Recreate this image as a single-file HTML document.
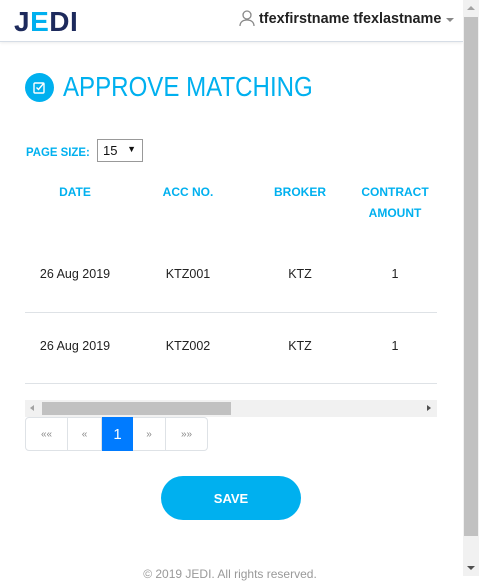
<!DOCTYPE html>
<html><head><style>
*{margin:0;padding:0;box-sizing:border-box}
body{width:479px;height:576px;overflow:hidden;position:relative;font-family:"Liberation Sans",sans-serif;background:#fff}
.a{position:absolute}
.hdr{left:0;top:0;width:463px;height:42px;border-bottom:1px solid #d6dde6;box-shadow:0 1px 3px rgba(0,0,0,.08);background:#fff}
.blue{color:#00b0ef}
.th{font-size:12px;font-weight:bold;color:#00b0ef;text-align:center;line-height:21px}
.td{font-size:12.5px;color:#222;text-align:center}
.pg{top:417px;height:34px;border:1px solid #dee2e6;border-left:none;font-size:10px;color:#888;display:flex;align-items:center;justify-content:center}
</style></head><body>
<div class="a hdr"></div>
<div class="a" style="left:14px;top:7px;font-size:28px;font-weight:bold;color:#1d2a5c;letter-spacing:0.5px;line-height:30px">J<span style="color:#00b0ef">E</span>DI</div>
<svg class="a" style="left:239px;top:10px" width="16" height="17" viewBox="0 0 16 17"><circle cx="8" cy="5" r="4" fill="none" stroke="#888" stroke-width="1.3"/><path d="M1 16c0-4 3-6 7-6s7 2 7 6" fill="none" stroke="#888" stroke-width="1.3"/></svg>
<div class="a" style="left:259px;top:11px;font-size:14.4px;font-weight:bold;color:#222">tfexfirstname tfexlastname</div>
<div class="a" style="left:446px;top:18px;width:0;height:0;border-left:4px solid transparent;border-right:4px solid transparent;border-top:4px solid #888"></div>
<div class="a" style="left:463px;top:0;width:16px;height:576px;background:#f1f1f1"></div>
<div class="a" style="left:464px;top:17px;width:14px;height:519px;background:#c1c1c1"></div>
<div class="a" style="left:467px;top:6px;border-left:4px solid transparent;border-right:4px solid transparent;border-bottom:4px solid #a3a3a3"></div>
<div class="a" style="left:467px;top:566px;border-left:4px solid transparent;border-right:4px solid transparent;border-top:4px solid #505050"></div>
<div class="a" style="left:25px;top:73px;width:29px;height:29px;border-radius:50%;background:#00b0ef"></div>
<svg class="a" style="left:33px;top:81px" width="13" height="13" viewBox="0 0 13 13"><rect x="1" y="2" width="10" height="10" rx="1" fill="none" stroke="#fff" stroke-width="1.4"/><path d="M3.5 6.5l2 2 5-6" fill="none" stroke="#fff" stroke-width="1.4"/></svg>
<div class="a blue" style="left:63px;top:70px;font-size:28px;line-height:34px;transform:scaleX(0.86);transform-origin:left top;white-space:nowrap">APPROVE MATCHING</div>
<div class="a blue" style="left:26px;top:145px;font-size:12px;font-weight:bold;transform:scaleX(0.95);transform-origin:left">PAGE SIZE:</div>
<div class="a" style="left:97px;top:139px;width:46px;height:23px;border:1px solid #999;font-size:13px;padding:3px 5px;color:#111">15<span style="position:absolute;right:6px;top:4px;font-size:9px">▼</span></div>
<div class="a th" style="left:35px;top:182px;width:80px">DATE</div>
<div class="a th" style="left:143px;top:182px;width:90px">ACC NO.</div>
<div class="a th" style="left:260px;top:182px;width:80px">BROKER</div>
<div class="a th" style="left:355px;top:182px;width:80px">CONTRACT<br>AMOUNT</div>
<div class="a td" style="left:25px;top:267px;width:100px">26 Aug 2019</div>
<div class="a td" style="left:138px;top:267px;width:100px">KTZ001</div>
<div class="a td" style="left:260px;top:267px;width:80px">KTZ</div>
<div class="a td" style="left:375px;top:267px;width:40px">1</div>
<div class="a" style="left:25px;top:312px;width:412px;height:1px;background:#dee2e6"></div>
<div class="a td" style="left:25px;top:339px;width:100px">26 Aug 2019</div>
<div class="a td" style="left:138px;top:339px;width:100px">KTZ002</div>
<div class="a td" style="left:260px;top:339px;width:80px">KTZ</div>
<div class="a td" style="left:375px;top:339px;width:40px">1</div>
<div class="a" style="left:25px;top:383px;width:412px;height:1px;background:#dee2e6"></div>
<div class="a" style="left:25px;top:400px;width:412px;height:17px;background:#f1f1f1"></div>
<div class="a" style="left:42px;top:402px;width:189px;height:13px;background:#c1c1c1"></div>
<div class="a" style="left:30px;top:405px;border-top:3px solid transparent;border-bottom:3px solid transparent;border-right:4px solid #a3a3a3"></div>
<div class="a" style="left:427px;top:405px;border-top:3px solid transparent;border-bottom:3px solid transparent;border-left:4px solid #505050"></div>
<div class="a pg" style="left:25px;width:43px;border-left:1px solid #dee2e6;border-radius:4px 0 0 4px">««</div>
<div class="a pg" style="left:68px;width:34px">«</div>
<div class="a" style="left:102px;top:417px;width:31px;height:34px;background:#007bff;color:#fff;font-size:15px;display:flex;align-items:center;justify-content:center">1</div>
<div class="a pg" style="left:133px;width:33px">»</div>
<div class="a pg" style="left:166px;width:42px;border-radius:0 4px 4px 0">»»</div>
<div class="a" style="left:161px;top:476px;width:140px;height:44px;border-radius:22px;background:#00b0ef;color:#fff;font-weight:bold;font-size:13px;display:flex;align-items:center;justify-content:center">SAVE</div>
<div class="a" style="left:100px;top:567px;width:260px;text-align:center;font-size:12px;color:#999">© 2019 JEDI. All rights reserved.</div>
</body></html>
